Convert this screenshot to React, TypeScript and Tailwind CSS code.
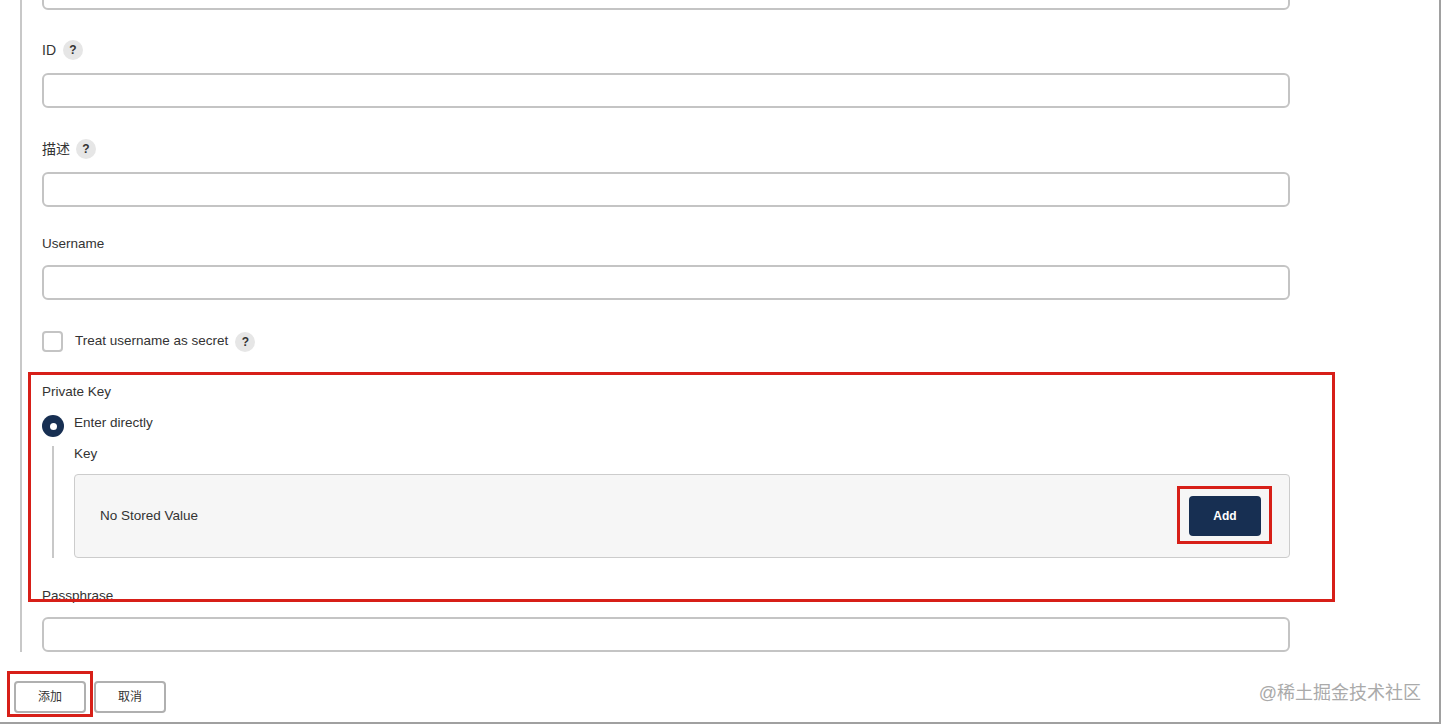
import React from "react";

const Help = () => (
  <span className="inline-flex items-center justify-center w-[20px] h-[20px] rounded-full bg-[#e6e6e6] text-[12px] font-bold text-[#333] leading-none">
    ?
  </span>
);

const Input = ({ className = "" }: { className?: string }) => (
  <div className={`w-[1248px] h-[35px] rounded-[6px] border-2 border-[#c4c4c4] bg-white ${className}`} />
);

export default function App() {
  return (
    <div className="relative w-[1441px] h-[724px] bg-white overflow-hidden border-r-2 border-b-2 border-[#a0a0a0] text-[13.5px] text-[#333] font-['Liberation_Sans','Noto_Sans_CJK_SC',sans-serif]">
      <div className="ml-[20px] w-[1272px] h-[652px] border-l-2 border-[#c8c8c8] pl-[20px] flex flex-col">
        <div className="w-[1248px] h-[36px] mt-[-26px] shrink-0 rounded-[6px] border-2 border-[#c4c4c4]" />

        <div className="mt-[30px] h-[20px] flex items-center gap-[7px]">
          <span className="text-[14px]">ID</span>
          <Help />
        </div>
        <Input className="mt-[13px] shrink-0" />

        <div className="mt-[31px] h-[20px] flex items-center gap-[6px]">
          <span className="text-[14px]">描述</span>
          <Help />
        </div>
        <Input className="mt-[13px] shrink-0" />

        <div className="mt-[27px] h-[20px] flex items-center">
          <span>Username</span>
        </div>
        <Input className="mt-[11px] shrink-0" />

        <div className="mt-[31px] h-[21px] flex items-center">
          <span className="w-[21px] h-[21px] rounded-[4px] border-2 border-[#c4c4c4] bg-white shrink-0" />
          <span className="ml-[12px]">Treat username as secret</span>
          <span className="ml-[7px] flex">
            <Help />
          </span>
        </div>

        <div className="mt-[30px] h-[20px] flex items-center">
          <span>Private Key</span>
        </div>

        <div className="mt-[13px] h-[22px] flex items-center">
          <span className="w-[22px] h-[22px] rounded-full bg-[#172f52] flex items-center justify-center shrink-0">
            <span className="w-[7px] h-[7px] rounded-full bg-white" />
          </span>
          <span className="ml-[10px] mb-[6px]">Enter directly</span>
        </div>

        <div className="mt-[9px] ml-[10px] border-l-2 border-[#c8c8c8] pl-[20px] flex flex-col">
          <div className="h-[16px] flex items-center">
            <span>Key</span>
          </div>
          <div className="mt-[12px] w-[1216px] h-[84px] rounded-[4px] border border-[#cccccc] bg-[#f6f6f6] flex items-center justify-between pl-[25px] pr-[28px]">
            <span>No Stored Value</span>
            <button className="w-[72px] h-[40px] rounded-[4px] bg-[#172f52] text-white text-[12px] font-bold">
              Add
            </button>
          </div>
        </div>

        <div className="mt-[28px] h-[20px] flex items-center">
          <span>Passphrase</span>
        </div>
        <Input className="mt-[11px] shrink-0" />
      </div>

      <div className="mt-[29px] ml-[14px] flex gap-[8px]">
        <button className="w-[72px] h-[32px] rounded-[4px] border-2 border-[#b0b0b0] bg-white text-[12px] text-[#333]">
          添加
        </button>
        <button className="w-[72px] h-[32px] rounded-[4px] border-2 border-[#b0b0b0] bg-white text-[12px] text-[#333]">
          取消
        </button>
      </div>

      <div className="absolute right-[18px] top-[681px] text-[18px] leading-[24px] text-[#aaaaaa]">
        @稀土掘金技术社区
      </div>

      <div className="absolute left-[28px] top-[372px] w-[1307px] h-[230px] border-[3px] border-[#d71f18] pointer-events-none" />
      <div className="absolute left-[1177px] top-[486px] w-[95px] h-[58px] border-[3px] border-[#d71f18] pointer-events-none" />
      <div className="absolute left-[7px] top-[671px] w-[86px] h-[46px] border-[3px] border-[#d71f18] pointer-events-none" />
    </div>
  );
}
